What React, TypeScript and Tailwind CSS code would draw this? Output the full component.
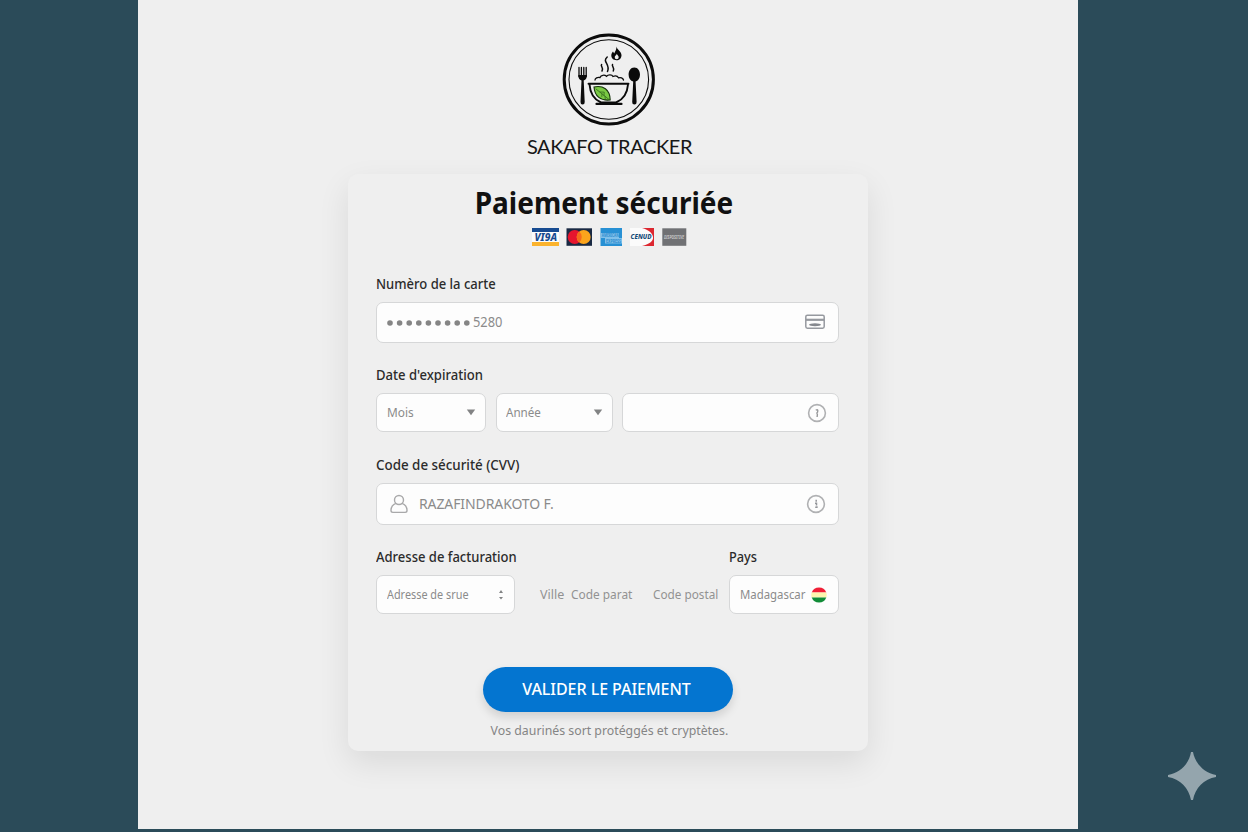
import type { ReactNode } from 'react';

const fieldBase =
  "flex items-center rounded-[7px] border-[1.5px] border-[#d6d7d8] bg-[#fdfdfd] text-[#8b8b8b]";

function Label({ children, fit = 'scale-x-[0.93]' }: { children: ReactNode; fit?: string }) {
  return (
    <div className={`h-5 origin-left whitespace-nowrap text-[14px] font-medium leading-5 text-[#2b2b2b] ${fit}`}>
      {children}
    </div>
  );
}

function Logo() {
  return (
    <svg width="94" height="94" viewBox="0 0 94 94" fill="none" stroke="#0b0b0b" strokeLinecap="round">
      <circle cx="46.800" cy="46.500" r="44.600" strokeWidth="3" />
      <circle cx="46.800" cy="46.500" r="39.800" strokeWidth="1.100" />
      <path d="M17 34.500v9M19.400 34.500v9M21.800 34.500v9M24.200 34.500v9" strokeWidth="1.300" />
      <path d="M16.300 42h8.600q0 4.500-3.200 5.500l1 21.500q.1 2.500-2.100 2.500t-2.100-2.500l1-21.500q-3.200-1-3.200-5.500z" fill="#0b0b0b" stroke="none" />
      <path d="M72.300 34.500c3.700 0 5.700 3.500 5.700 7.200 0 3.600-2 6.100-4.400 6.900l1 20.400q.1 2.500-2.200 2.500t-2.200-2.500l1-20.400c-2.600-.8-4.600-3.300-4.600-6.900 0-3.700 2-7.200 5.700-7.200z" fill="#0b0b0b" stroke="none" />
      <path d="M26.500 50.700h40M27.500 51.500c.6 8 4.400 15 11.500 18h15c7.500-3 11.400-10 12-18" strokeWidth="1.900" />
      <path d="M34.500 70.900h25" strokeWidth="2.200" />
      <path d="M33 47c0-2 2.500-3 5-2.500 1-2.500 4.500-3 6.500-1.200 1.500-2 5.500-2 6.500.2 2.500-1 4.500-.5 5.500 1.300 2-.6 4.500 0 5 2.200" strokeWidth="1.300" />
      <path d="M39.600 31.500c-1.500 2 2.500 3 .4 6.500M45.200 24c-5.500 5 3.500 7 .3 14.500M50.500 31.500c-1 2 2.500 3 .8 6.500" strokeWidth="1.500" />
      <path d="M54.300 13.500c1 3.500 5.200 5 5.200 8.800 0 3-2.200 5-5 5-3.100 0-5.200-2-5.200-4.700 0-1.800.9-3.200 1.700-4l1.200 2c1-2.500 2.600-4 2.100-7.100z" fill="#0b0b0b" stroke="none" />
      <path d="M54.800 20.800c.5 1.500 1.900 2 1.900 3.500a2 2 0 0 1-4 0c0-1.300 1.800-2 2.100-3.500z" fill="#efefef" stroke="none" />
      <path d="M32 54c9-2 16 2.500 16.200 13-9.500 1-15.500-3.500-16.200-13z" fill="#79c943" stroke="#15310c" strokeWidth="1.100" />
      <path d="M34 56l13 10.500M38 59l3.500.1M42 62.500l.2-3.200M40 61l-.2 2.500M43 63.500l.3 2.500" stroke="#2a5a18" strokeWidth=".7" />
    </svg>
  );
}

function CardBrands() {
  return (
    <svg width="160" height="18" viewBox="0 0 160 18" fontFamily="Noto Sans, sans-serif">
      <path fill="#fbfbfb" d="M0 0h27v18H0z" />
      <path fill="#174b91" d="M0 0h27v4H0z" />
      <path fill="#fbb32d" d="M0 14h27v4H0z" />
      <text x="2.500" y="13" fontSize="10.500" fontWeight="800" fontStyle="italic" fill="#174b91" textLength="22.500" lengthAdjust="spacingAndGlyphs">VI9A</text>
      <path fill="#192943" d="M34.500 .3H60v17.500H34.500z" />
      <circle cx="42.700" cy="9" r="7" fill="#e6152e" />
      <circle cx="51.700" cy="9" r="7" fill="#fba41c" />
      <path d="M47.200 3.600a7 7 0 0 1 0 10.800 7 7 0 0 1 0-10.800z" fill="#f56b1b" />
      <path fill="#2790d4" d="M68.500 0H90v18H68.500z" />
      <path fill="#7fc0ea" d="M69 5h18v5h3v5.500H73V10h-4z" />
      <text x="69.800" y="9.300" fontSize="4.800" fontWeight="700" fill="#2f8fd0" textLength="17" lengthAdjust="spacingAndGlyphs">AMERICAN</text>
      <text x="74" y="14.500" fontSize="4.800" fontWeight="700" fill="#2f8fd0" textLength="15" lengthAdjust="spacingAndGlyphs">EXPRESS</text>
      <path fill="#fbfbfb" d="M98 0h24v18H98z" />
      <path fill="#dc2730" d="M110 0h12v18h-12c8-2 11.500-5 11-9-.5-4-4-7-11-9z" />
      <text x="98.500" y="11.300" fontSize="6.300" fontWeight="800" fontStyle="italic" fill="#174b78" textLength="21" lengthAdjust="spacingAndGlyphs">CENUD</text>
      <path fill="#707174" d="M130.300 .3h24v17.500h-24z" />
      <text x="132" y="10.800" fontSize="5" fontStyle="italic" fontWeight="600" fill="#d2d2d3" textLength="20" lengthAdjust="spacingAndGlyphs">DISPOSITIVE</text>
    </svg>
  );
}

function CreditCard() {
  return (
    <svg width="20" height="16" viewBox="0 0 20 16" fill="none" stroke="#96999f">
      <rect x=".8" y="1.200" width="18.400" height="13" rx="1.600" strokeWidth="1.500" />
      <path d="M1 5.800h18" strokeWidth="2.200" />
      <ellipse cx="10" cy="10.800" rx="6" ry="1.500" fill="#85888e" stroke="none" />
    </svg>
  );
}

function Hint({ dotted = false }: { dotted?: boolean }) {
  return (
    <svg width="20" height="20" viewBox="0 0 20 20" fill="none" stroke="#b0b1b3" strokeWidth="1.600">
      <circle cx="10" cy="10" r="8.400" />
      {dotted ? (
        <path d="M10.200 5.800v2M9 9.200h1.500v2.200M9.200 13.300h1.700v-1" stroke="#94969a" strokeWidth="1.500" />
      ) : (
        <path d="M8.800 7.300q1.900-1.500 2 .2t-.9 2.500l.5 1.500-.3 2.500" stroke="#98999b" strokeWidth="1.400" />
      )}
    </svg>
  );
}

function Person() {
  return (
    <svg width="18" height="20" viewBox="0 0 18 20" fill="none" stroke="#a9a9aa" strokeWidth="1.400">
      <circle cx="9" cy="6" r="4.500" />
      <path d="M5.900 9.400C2.500 10.700 1 13.200 1 16.600c0 1.300.6 1.800 1.800 1.800h12.400c1.200 0 1.800-.5 1.800-1.800 0-3.400-1.500-5.900-4.900-7.200" />
    </svg>
  );
}

function Caret() {
  return (
    <svg width="10" height="7" viewBox="0 0 10 7">
      <path d="M.8.5h8.400L5 6.300z" fill="#828384" />
    </svg>
  );
}

function Stepper() {
  return (
    <svg width="6" height="10" viewBox="0 0 6 10" fill="#828384">
      <path d="M3 0l2 3H1zM1 7h4L3 9.500z" />
    </svg>
  );
}

function Flag() {
  return (
    <svg className="shrink-0" width="16" height="16" viewBox="0 0 16 16">
      <path d="M.7 5.500a7.800 7.800 0 0 1 14.600 0z" fill="#f01f36" />
      <path d="M.7 5.500h14.600q.9 2.500 0 5H.7q-.9-2.500 0-5z" fill="#fdf5ae" />
      <path d="M.7 10.500h14.600a7.800 7.800 0 0 1-14.600 0z" fill="#118c37" />
    </svg>
  );
}

export default function App() {
  return (
    <div className="relative h-[832px] w-[1248px] overflow-hidden bg-[#2b4b59] pl-[138px] font-['Noto_Sans',sans-serif]">
      <main className="flex h-[829px] w-[940px] flex-col items-center bg-[#efefef] pt-[33px]">
        <div className="ml-0.5 h-[94px]">
          <Logo />
        </div>
        <div className="ml-[3px] mt-[7px] h-6 whitespace-nowrap font-['Lato',sans-serif] text-[20px] leading-6 tracking-[-0.4px] text-[#171717]">
          SAKAFO TRACKER
        </div>

        <section className="mt-4 flex h-[577px] w-[520px] flex-col rounded-[10px] bg-[#efefef] px-7 pt-[9px] shadow-[0_12px_32px_rgba(0,0,0,0.09)]">
          <h1 className="-ml-2 h-10 scale-x-[0.933] whitespace-nowrap text-center text-[30px] font-bold leading-10 text-[#111]">
            Paiement sécuriée
          </h1>
          <div className="ml-[156px] mt-[5px] h-[18px]">
            <CardBrands />
          </div>

          <div className="mt-7">
            <Label>Numèro de la carte</Label>
          </div>
          <div className={`${fieldBase} mt-2 h-[41px] w-[463px] pl-[10px] pr-[13px]`}>
            <svg width="84" height="8" viewBox="0 0 84 8" fill="#858585">
              {[3, 12.6, 22.2, 31.8, 41.4, 51, 60.6, 70.2, 79.8].map((x) => (
                <circle key={x} cx={x} cy="4" r="2.800" />
              ))}
            </svg>
            <span className="-mt-0.5 ml-[1.5px] origin-left scale-x-[0.92] text-[14px]">5280</span>
            <span className="-mt-px ml-auto">
              <CreditCard />
            </span>
          </div>

          <div className="mt-[22px]">
            <Label fit="scale-x-[0.935]">Date d&apos;expiration</Label>
          </div>
          <div className="mt-2 flex w-[463px]">
            <div className={`${fieldBase} h-[39px] w-[110px] justify-between pl-[10px] pr-[9px] text-[12.5px]`}>
              <span className="mt-0.5 origin-left scale-x-[0.95]">Mois</span>
              <Caret />
            </div>
            <div className={`${fieldBase} ml-[10px] h-[39px] w-[117px] justify-between pl-[9px] pr-[9px] text-[12.5px]`}>
              <span className="mt-0.5 origin-left scale-x-[0.93]">Année</span>
              <Caret />
            </div>
            <div className={`${fieldBase} ml-[9px] h-[39px] w-[217px] justify-end pr-[11px]`}>
              <Hint />
            </div>
          </div>

          <div className="mt-[23px]">
            <Label fit="scale-x-[0.955]">Code de sécurité (CVV)</Label>
          </div>
          <div className={`${fieldBase} mt-2 h-[42px] w-[463px] pl-[13px] pr-3`}>
            <Person />
            <span className="-mt-px ml-[11px] text-[14px] tracking-[-0.1px]">RAZAFINDRAKOTO F.</span>
            <span className="ml-auto">
              <Hint dotted />
            </span>
          </div>

          <div className="mt-[22px] flex">
            <div className="w-[353px]">
              <Label>Adresse de facturation</Label>
            </div>
            <Label fit="scale-x-[0.91]">Pays</Label>
          </div>
          <div className="mt-2 flex w-[463px] items-center whitespace-nowrap text-[12.5px] text-[#929292]">
            <div className={`${fieldBase} h-[39px] w-[139px] justify-between pl-[10px] pr-[10px] text-[12px]`}>
              <span className="origin-left scale-x-[0.905]">Adresse de srue</span>
              <Stepper />
            </div>
            <span className="ml-[25px] mt-0.5 w-[31px]">Ville</span>
            <span className="mt-0.5 w-[82px] origin-left scale-x-[0.95]">Code parat</span>
            <span className="mt-0.5 w-[76px] origin-left scale-x-[0.94]">Code postal</span>
            <div className={`${fieldBase} h-[39px] w-[110px] justify-between pl-[10px] pr-[11px]`}>
              <span className="mt-0.5 w-[66px] origin-left scale-x-[0.91]">Madagascar</span>
              <Flag />
            </div>
          </div>

          <button className="ml-[107px] mt-[53px] h-[45px] w-[250px] shrink-0 whitespace-nowrap rounded-full bg-[#0475d0] pb-px pr-[3px] text-[16px] font-medium tracking-[-0.05px] text-white shadow-[0_5px_10px_rgba(0,0,0,0.13)]">
            VALIDER LE PAIEMENT
          </button>
          <p className="mt-2 h-5 scale-x-[0.947] whitespace-nowrap pl-[3px] text-center text-[13px] leading-5 text-[#858585]">
            Vos daurinés sort protéggés et cryptètes.
          </p>
        </section>
      </main>
      <svg className="absolute left-[1168px] top-[752px]" width="48" height="48" viewBox="0 0 48 48">
        <path d="M23 0h2c2 11 11 21 23 23v2c-12 2-21 11-23 23h-2c-2-12-11-21-23-23v-2C12 21 21 12 23 0z" fill="#94a5ad" />
      </svg>
    </div>
  );
}
